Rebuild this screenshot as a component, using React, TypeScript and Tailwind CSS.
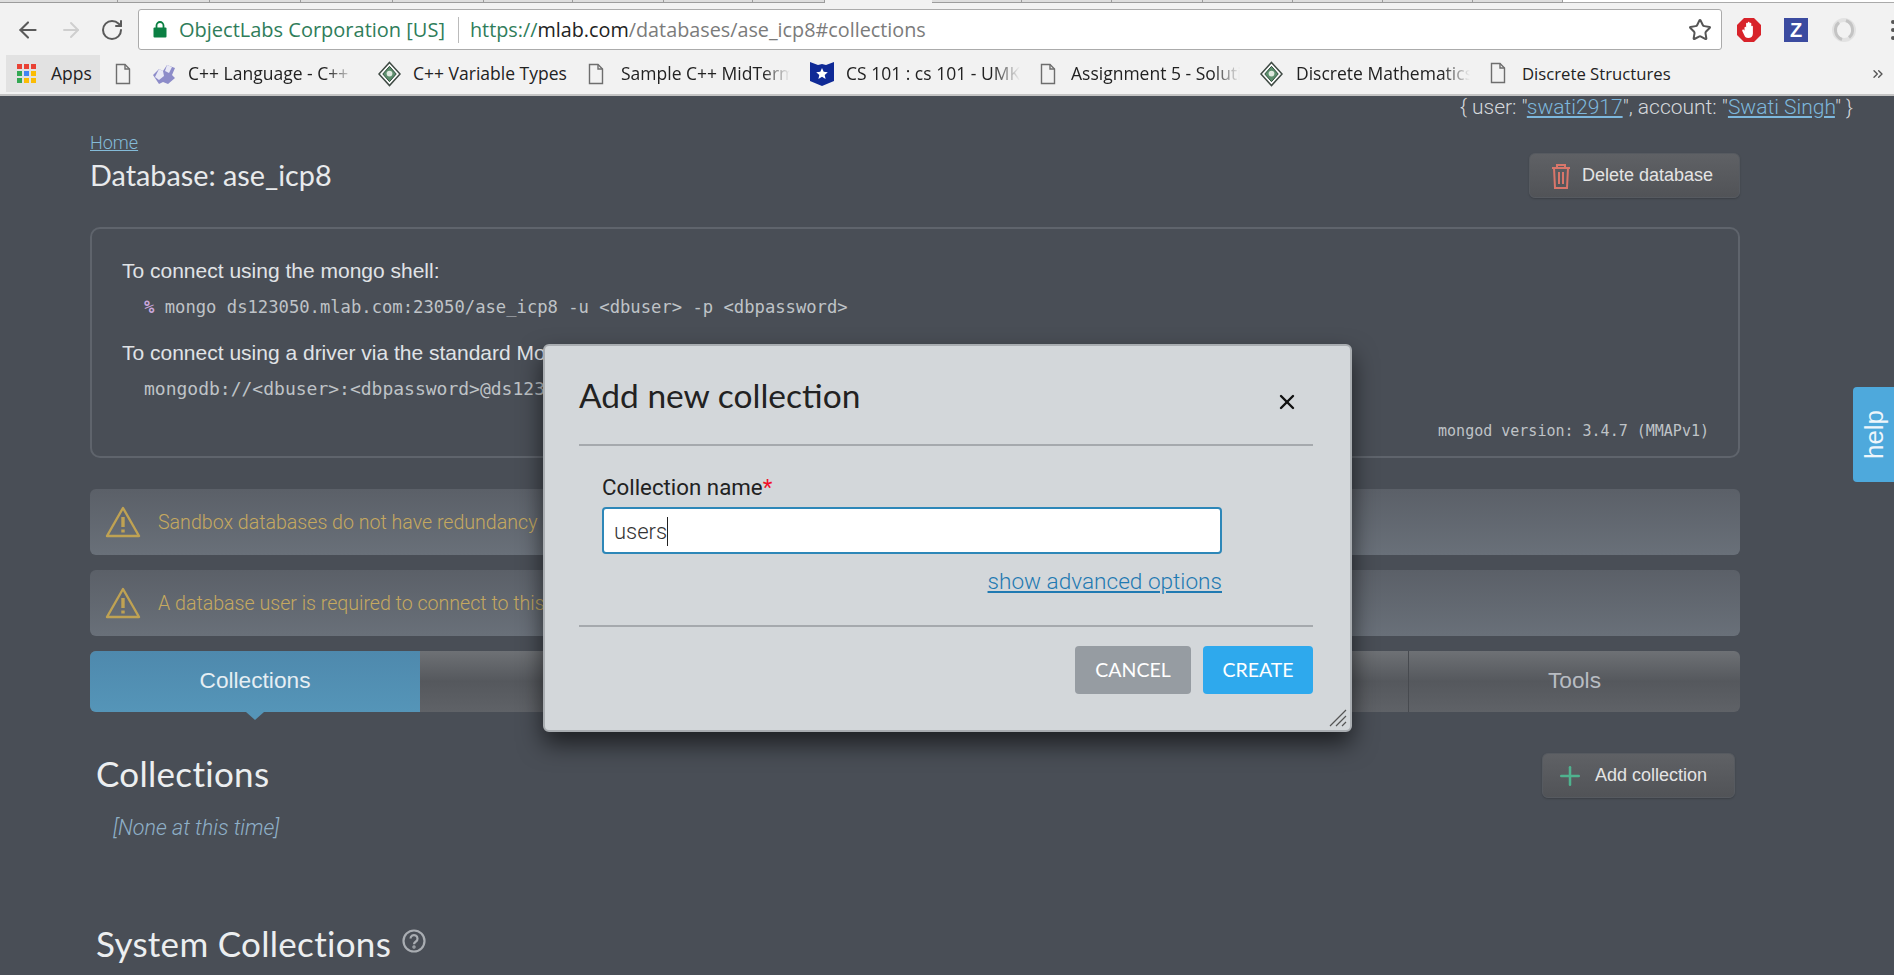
import React from "react";
import { ArrowLeft, ArrowRight, RotateCw, Star, X, Plus, ChevronsRight } from "lucide-react";

const tabEdges = ["w-[118px]","w-[92px]","w-[91px]","w-[92px]","w-[91px]","w-[89px]","w-[91px]","w-[89px]","w-[72px]"];
const tabEdges2 = ["w-[90px]","w-[90px]","w-[91px]","w-[90px]","w-[90px]","w-[90px]","w-[90px]"];

function Doc() {
  return (
    <svg width="16" height="22" viewBox="0 0 16 22" className="shrink-0" fill="none" stroke="#6e6e6e" strokeWidth="1.4">
      <path d="M1.5 1.5h8.5l4.5 4.5v14.5h-13z" />
      <path d="M10 1.5v4.5h4.5" />
    </svg>
  );
}

function Diamond() {
  return (
    <svg width="23" height="26" viewBox="0 0 24 26" className="shrink-0">
      <path d="M12 1L23 13 12 25 1 13z" fill="#fff" stroke="#3f4a44" strokeWidth="1.6" />
      <path d="M12 5L19 13 12 21 5 13z" fill="#5d8f6d" stroke="#2e4a3a" strokeWidth="1" />
      <circle cx="12" cy="12.5" r="3" fill="#dfe9df" />
    </svg>
  );
}

function Puzzle() {
  return (
    <svg width="24" height="22" viewBox="0 0 24 22" className="shrink-0">
      <path d="M1 12l6-6 4 2 4-6 8 3-3 7 3 3-7 6-5-2-4 2z" fill="#8d8cc9" />
      <path d="M7 6l4 2 1 5-5 4-4-3zM15 2l5 2-3 6-4-2z" fill="#e9e9f6" />
    </svg>
  );
}

function Shield() {
  return (
    <svg width="24" height="25" viewBox="0 0 24 25" className="shrink-0">
      <path d="M0 1l8 3 4-1 4 1 8-3v19l-12 5-12-5z" fill="#0f2a96" />
      <path d="M12 7l1.7 3.8 4.1.4-3.1 2.7.9 4.1-3.6-2.2-3.6 2.2.9-4.1-3.1-2.7 4.1-.4z" fill="#fff" />
    </svg>
  );
}

function Bookmark({ icon, text, w, fade, ml = "ml-[12px]", mr = "mr-[20px]", size = "" }: { icon: React.ReactNode; text: string; w: string; fade?: boolean; ml?: string; mr?: string; size?: string }) {
  return (
    <div className={`flex items-center shrink-0 ${w}`}>
      {icon}
      <span
        className={
          fade
            ? `${ml} ${mr} overflow-hidden whitespace-nowrap flex-1 [mask-image:linear-gradient(to_right,black_84%,transparent)]`
            : `${ml} whitespace-nowrap ${size}`
        }
      >
        {text}
      </span>
    </div>
  );
}

function Warn() {
  return (
    <svg width="36" height="32" viewBox="0 0 36 32" className="shrink-0" fill="none" stroke="#bfa253" strokeWidth="2.4" strokeLinejoin="round">
      <path d="M18 2L34 30H2z" />
      <path d="M18 11v10" strokeWidth="3.4" />
      <path d="M18 23.5v3" strokeWidth="3.4" />
    </svg>
  );
}

function Alert({ text }: { text: string }) {
  return (
    <div className="h-[66px] rounded-md bg-gradient-to-b from-[#5b6068] to-[#697079] flex items-center pl-[15px] gap-[17px]">
      <Warn />
      <span className="pt-[1px] font-['Roboto'] font-light text-[19.6px] text-[#c6a95f] whitespace-nowrap">{text}</span>
    </div>
  );
}

function DarkButton({ w, children }: { w: string; children: React.ReactNode }) {
  return (
    <div className={`h-[45px] ${w} rounded-md border border-[#565a60] bg-gradient-to-b from-[#5f6165] to-[#515357] flex items-center font-['Liberation_Sans'] text-[18px] text-[#e4e4e4] shadow-[0_1px_2px_rgba(0,0,0,0.2)]`}>
      {children}
    </div>
  );
}

export default function App() {
  return (
    <div className="relative h-[975px] w-[1894px] overflow-hidden bg-[#494e56]">
      {/* browser chrome */}
      <div className="h-[96px] bg-[#f2f2f2] border-b-2 border-[#c4c4c4] flex flex-col font-['Open_Sans'] text-[#222]">
        <div className="h-[9px] flex items-start shrink-0">
          <div className="flex h-[3px]">
            {tabEdges.map((w, i) => (
              <div key={i} className={`${w} h-[3px] bg-[#dedede] border-b border-r border-[#9c9c9c]`} />
            ))}
          </div>
          <div className="w-[107px] h-[3px]" />
          <div className="flex h-[3px]">
            {tabEdges2.map((w, i) => (
              <div key={i} className={`${w} h-[3px] bg-[#dedede] border-b border-r border-[#9c9c9c]`} />
            ))}
          </div>
          <div className="flex-1 h-[3px] bg-white border-b border-[#aaa]" />
        </div>
        <div className="h-[41px] flex items-center shrink-0">
          <div className="flex items-center w-[138px] pl-[15px] gap-[18px] shrink-0">
            <ArrowLeft size={26} strokeWidth={1.9} className="text-[#5a5a5a]" />
            <ArrowRight size={24} strokeWidth={1.9} className="text-[#cfcfcf]" />
            <RotateCw size={24} strokeWidth={2} className="text-[#5a5a5a] -ml-[1px]" />
          </div>
          <div className="w-[1584px] h-[41px] bg-white border border-[#ababab] rounded-[3px] flex items-center pl-[14px] pr-[9px] shrink-0">
            <svg width="14" height="17" viewBox="0 0 14 17" className="shrink-0">
              <path d="M3.5 7V4.5a3.5 3.5 0 0 1 7 0V7" fill="none" stroke="#0b8043" strokeWidth="1.8" />
              <rect x="0.5" y="6.5" width="13" height="10" rx="1" fill="#0b8043" />
            </svg>
            <span className="ml-[12px] text-[20px] text-[#2f7d5a] whitespace-nowrap">ObjectLabs Corporation [US]</span>
            <span className="ml-[13px] h-[26px] w-px bg-[#bbb]" />
            <span className="ml-[11px] text-[19.8px] text-[#7b7b7b] whitespace-nowrap">
              <span className="text-[#2f7d5a]">https://</span>
              <span className="text-[#222]">mlab.com</span>/databases/ase_icp8#collections
            </span>
            <Star size={24} strokeWidth={2} className="ml-auto text-[#555]" />
          </div>
          <div className="flex items-center shrink-0">
            <svg width="24" height="24" viewBox="0 0 24 24" className="ml-[15px]">
              <path d="M7 0h10l7 7v10l-7 7H7l-7-7V7z" fill="#d8232a" />
              <path d="M7.5 9.5c0-1 1.6-1 1.6 0V5.5c0-1.1 1.7-1.1 1.7 0V4.5c0-1.1 1.8-1.1 1.8 0v1c0-1.1 1.7-1.1 1.7 0v3c0-1 1.6-1 1.6 0v7c0 3-2 4.5-4.6 4.5-2.4 0-3.4-1.3-4.1-3L5.3 13c-.5-1.2 1-1.9 1.7-1l.5.7z" fill="#fff" />
            </svg>
            <div className="ml-[23px] w-[24px] h-[24px] bg-[#3b4ba0] flex items-center justify-center font-['Liberation_Sans'] font-bold text-white text-[20px] leading-none">Z</div>
            <svg width="24" height="24" viewBox="0 0 24 24" className="ml-[24px]">
              <circle cx="12" cy="12" r="10" fill="none" stroke="#e2e2e2" strokeWidth="4" />
              <path d="M14 2.5a10 10 0 0 1 3 17M10 21.5a10 10 0 0 1-3-17" fill="none" stroke="#c4c4c4" strokeWidth="3" />
            </svg>
            <div className="ml-[35px] flex flex-col gap-[4px]">
              <span className="w-[4px] h-[4px] rounded-full bg-[#555]" />
              <span className="w-[4px] h-[4px] rounded-full bg-[#555]" />
              <span className="w-[4px] h-[4px] rounded-full bg-[#555]" />
            </div>
          </div>
        </div>
        <div className="mt-[5px] h-[37px] flex items-center pl-[6px] text-[17.5px] text-[#222] relative shrink-0">
          <div className="w-[94px] h-[37px] bg-[#e2e2e2] flex items-center pl-[11px] shrink-0 mr-[15px]">
            <div className="grid grid-cols-3 gap-[2px]">
              {["bg-[#e94235]","bg-[#e94235]","bg-[#e94235]","bg-[#34a853]","bg-[#4285f4]","bg-[#fbbc05]","bg-[#34a853]","bg-[#fbbc05]","bg-[#fbbc05]"].map((c, i) => (
                <span key={i} className={`w-[5px] h-[5px] ${c}`} />
              ))}
            </div>
            <span className="ml-[15px]">Apps</span>
          </div>
          <div className="w-[37px] shrink-0"><Doc /></div>
          <Bookmark icon={<Puzzle />} text="C++ Language - C++ Language" w="w-[226px]" fade mr="mr-[24px]" />
          <Bookmark icon={<Diamond />} text="C++ Variable Types" w="w-[210px]" />
          <Bookmark icon={<Doc />} text="Sample C++ MidTerm Exam" w="w-[222px]" fade ml="ml-[17px]" />
          <Bookmark icon={<Shield />} text="CS 101 : cs 101 - UMKC School" w="w-[230px]" fade />
          <Bookmark icon={<Doc />} text="Assignment 5 - Solutions" w="w-[220px]" fade ml="ml-[15px]" />
          <Bookmark icon={<Diamond />} text="Discrete Mathematics and" w="w-[230px]" fade ml="ml-[13px]" />
          <Bookmark icon={<Doc />} text="Discrete Structures" w="w-[190px]" ml="ml-[16px]" size="text-[16.7px]" />
          <ChevronsRight size={16} strokeWidth={2} className="absolute left-[1870px] text-[#555]" />
        </div>
      </div>

      {/* page */}
      <div className="h-[23px] pr-[41px] text-right font-['Roboto'] font-light text-[21px] leading-[23px] text-[#d5d8dc]">
        {"{ user: \""}
        <span className="underline text-[#7db7dc]">swati2917</span>
        {"\", account: \""}
        <span className="underline text-[#7db7dc]">Swati Singh</span>
        {"\" }"}
      </div>
      <div className="ml-[90px] w-[1650px]">
        <div className="flex justify-between items-end h-[79px]">
          <div className="pt-[12px] self-start">
            <div className="font-['Roboto'] font-light text-[18px] leading-[24px] underline text-[#84bbd8]">Home</div>
            <div className="mt-[1px] font-['Lato'] text-[28.8px] leading-[38px] text-[#e8eaec]">Database: ase_icp8</div>
          </div>
          <DarkButton w="w-[211px]">
            <svg width="20" height="26" viewBox="0 0 20 26" fill="none" stroke="#d9766a" strokeWidth="2" className="ml-[21px]">
              <path d="M1 5h18M6 5V2h8v3M3 5l1 20h12l1-20M8 9v12M12 9v12" />
            </svg>
            <span className="ml-[11px]">Delete database</span>
          </DarkButton>
        </div>

        <div className="relative mt-[29px] h-[231px] rounded-[10px] border-2 border-[#5f646c] pl-[30px] pt-[28px] text-[#e0e3e6]">
          <div className="font-['Liberation_Sans'] text-[21px] leading-[28px]">To connect using the mongo shell:</div>
          <div className="mt-[10px] ml-[22px] font-['DejaVu_Sans_Mono'] text-[17.2px] leading-[24px] text-[#bfc3c7]">
            <span className="text-[#c9a6dc] font-bold">%</span> mongo ds123050.mlab.com:23050/ase_icp8 -u &lt;dbuser&gt; -p &lt;dbpassword&gt;
          </div>
          <div className="mt-[20px] font-['Liberation_Sans'] text-[21px] leading-[28px]">To connect using a driver via the standard MongoDB URI:</div>
          <div className="mt-[10px] ml-[22px] font-['DejaVu_Sans_Mono'] text-[18px] leading-[24px] text-[#bfc3c7]">mongodb://&lt;dbuser&gt;:&lt;dbpassword&gt;@ds123050.mlab.com:23050/ase_icp8</div>
          <div className="absolute right-[29px] bottom-[15px] font-['DejaVu_Sans_Mono'] text-[15px] leading-[20px] text-[#bfc3c7]">mongod version: 3.4.7 (MMAPv1)</div>
        </div>

        <div className="mt-[31px] flex flex-col gap-[15px]">
          <Alert text="Sandbox databases do not have redundancy and are not for production." />
          <Alert text="A database user is required to connect to this database." />
          <div className="relative h-[61px] rounded-md flex font-['Liberation_Sans'] text-[22.7px] bg-gradient-to-b from-[#6e7175] via-[#55585d] to-[#5f6267]">
            <div className="relative w-[330px] rounded-l-md bg-gradient-to-b from-[#4e89ad] to-[#5595b8] text-[#e6eef3] flex items-center justify-center pb-[2px]">
              Collections
              <span className="absolute left-1/2 -translate-x-1/2 top-full w-0 h-0 border-l-[9px] border-r-[9px] border-t-[8px] border-l-transparent border-r-transparent border-t-[#5595b8]" />
            </div>
            <div className="flex-1 border-r border-[#474a4f]" />
            <div className="w-[331px] flex items-center justify-center text-[#b8bcc2] pb-[2px]">Tools</div>
          </div>
        </div>

        <div className="mt-[41px] flex justify-between items-start pr-[5px] pl-[6px]">
          <div className="font-['Lato'] text-[35px] leading-[44px] -mt-[2px] tracking-[0.3px] text-[#eceef0]">Collections</div>
          <DarkButton w="w-[193px]">
            <Plus size={30} strokeWidth={2} className="ml-[12px] text-[#4fb28e]" />
            <span className="ml-[10px]">Add collection</span>
          </DarkButton>
        </div>
        <div className="mt-[17px] ml-[23px] font-['Roboto'] font-light italic text-[21.5px] leading-[26px] text-[#8fb0c8]">[None at this time]</div>
        <div className="mt-[80px] ml-[6px] flex items-center gap-[11px]">
          <span className="font-['Lato'] text-[35px] leading-[44px] tracking-[0.3px] text-[#eceef0]">System Collections</span>
          <svg width="24" height="24" viewBox="0 0 24 24" fill="none" stroke="#a9adb2" strokeWidth="2.2" className="-mt-[4px]">
            <circle cx="12" cy="12" r="10.5" />
            <path d="M8.5 9.5a3.5 3.5 0 1 1 5.4 3c-1.2.8-1.9 1.4-1.9 2.7" />
            <circle cx="12" cy="18" r="0.6" />
          </svg>
        </div>
      </div>

      {/* help tab */}
      <div className="absolute left-[1853px] top-[387px] w-[41px] h-[95px] rounded-l-[4px] bg-[#4ea9dc] flex items-center justify-center">
        <span className="block -rotate-90 font-['Liberation_Sans'] text-[26px] text-[#eef6fb] ml-[2px]">help</span>
      </div>

      {/* modal */}
      <div className="absolute left-[543px] top-[344px] w-[809px] h-[388px] rounded-[6px] border-2 border-[#a9adb1] bg-[#d3d7da] shadow-[0_12px_24px_rgba(0,0,0,0.6)] pl-[34px] pr-[37px]">
        <div className="h-[100px] border-b-2 border-[#a5a9ad] flex items-start justify-between">
          <div className="mt-[29px] font-['Lato'] text-[33.5px] leading-[40px] text-[#222]">Add new collection</div>
          <X size={24} strokeWidth={2.4} className="mt-[44px] mr-[14px] text-[#111]" />
        </div>
        <div className="h-[181px] border-b-2 border-[#a5a9ad] px-[23px] pt-[27px]">
          <div className="font-['Roboto'] text-[22.3px] leading-[28px] text-[#222]">
            Collection name<span className="text-[#f0102a]">*</span>
          </div>
          <div className="mt-[6px] w-[620px] h-[47px] rounded-[4px] border-2 border-[#2d87b8] bg-white flex items-center pl-[10px] pt-[1px] font-['Roboto'] font-light text-[22px] text-[#333]">
            users<span className="w-px h-[29px] bg-[#222]" />
          </div>
          <div className="mt-[14px] w-[620px] text-right font-['Roboto'] font-light text-[22.6px] leading-[28px] underline text-[#1f7ab2]">show advanced options</div>
        </div>
        <div className="mt-[19px] flex justify-end gap-[12px] font-['Lato'] text-[19.5px] text-white">
          <div className="w-[116px] h-[48px] rounded-[4px] bg-[#969ca2] flex items-center justify-center">CANCEL</div>
          <div className="w-[110px] h-[48px] rounded-[4px] bg-[#2ea9ed] flex items-center justify-center">CREATE</div>
        </div>
        <svg width="18" height="18" viewBox="0 0 18 18" className="absolute right-[3px] bottom-[3px]" stroke="#555" strokeWidth="1.2">
          <path d="M1 17L17 1M7 17L17 7M13 17l4-4" />
        </svg>
      </div>
    </div>
  );
}
